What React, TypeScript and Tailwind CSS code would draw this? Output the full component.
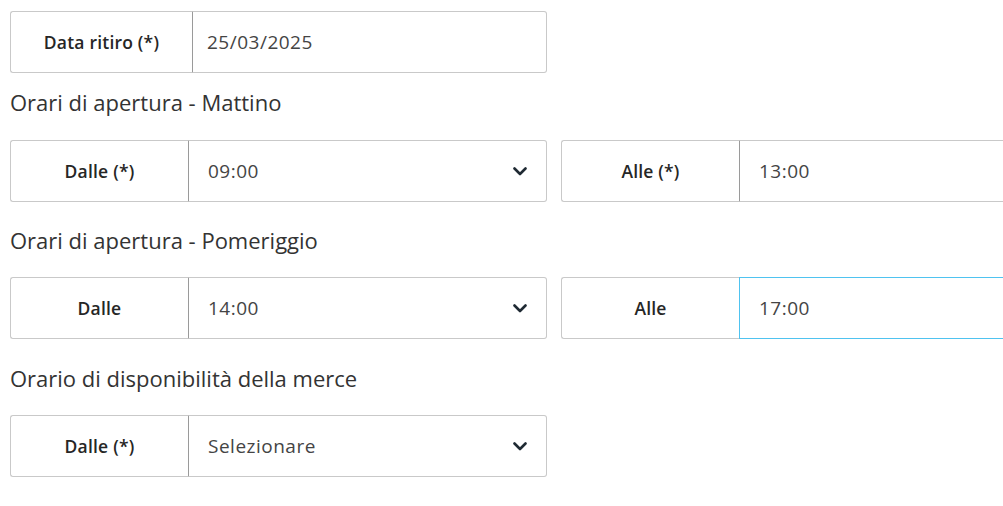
import React from 'react';

const Chevron: React.FC = () => (
  <svg width="14" height="9" viewBox="0 0 14 9" fill="none" className="shrink-0">
    <path d="M1.5 1.5 L7 7 L12.5 1.5" stroke="#1f2a33" strokeWidth="2.6" strokeLinecap="round" strokeLinejoin="round" />
  </svg>
);

type FieldProps = {
  label: string;
  value: string;
  select?: boolean;
  focused?: boolean;
  labelWidth?: string;
  padLeft?: string;
};

const Field: React.FC<FieldProps> = ({ label, value, select, focused, labelWidth = 'w-[178px]', padLeft = 'pl-[19px]' }) => (
  <div className="flex w-[537px] h-[62px] shrink-0">
    <div className={`${labelWidth} shrink-0 flex items-center justify-center border border-r-0 border-[#c9c9c9] rounded-l-[3px] text-[17.5px] font-semibold tracking-[0.2px] text-[#262626]`}>
      {label}
    </div>
    {focused ? (
      <div className="flex-1 flex p-px bg-[#4fc3f0] rounded-r-[3px]">
        <div className={`flex-1 flex items-center ${padLeft} pr-[19px] bg-white rounded-r-[2px] text-[19px] tracking-[0.5px] text-[#444]`}>
          <span>{value}</span>
        </div>
      </div>
    ) : (
      <div
        className={`flex-1 flex items-center justify-between ${padLeft} pr-[19px] border border-[#c9c9c9] border-l-[#9a9a9a] rounded-r-[3px] text-[19px] tracking-[0.5px] text-[#444]`}
      >
        <span>{value}</span>
        {select && <Chevron />}
      </div>
    )}
  </div>
);

const Heading: React.FC<{ children: React.ReactNode }> = ({ children }) => (
  <h3 className="text-[22px] leading-[28px] text-[#333] font-normal">{children}</h3>
);

export default function App() {
  return (
    <div className="w-[1003px] h-[506px] overflow-hidden bg-white" style={{ fontFamily: '"Open Sans", "Noto Sans", sans-serif' }}>
      <div className="w-[1100px] pl-[10px] pt-[11px]">
        <Field label="Data ritiro (*)" value="25/03/2025" labelWidth="w-[182px]" padLeft="pl-[14px]" />

        <div className="mt-[15px] mb-[24px]">
          <Heading>Orari di apertura - Mattino</Heading>
        </div>
        <div className="flex gap-[14px]">
          <Field label="Dalle (*)" value="09:00" select />
          <Field label="Alle (*)" value="13:00" />
        </div>

        <div className="mt-[24px] mb-[23px]">
          <Heading>Orari di apertura - Pomeriggio</Heading>
        </div>
        <div className="flex gap-[14px]">
          <Field label="Dalle" value="14:00" select />
          <Field label="Alle" value="17:00" focused />
        </div>

        <div className="mt-[25px] mb-[23px]">
          <Heading>Orario di disponibilità della merce</Heading>
        </div>
        <div className="flex">
          <Field label="Dalle (*)" value="Selezionare" select />
        </div>
      </div>
    </div>
  );
}
